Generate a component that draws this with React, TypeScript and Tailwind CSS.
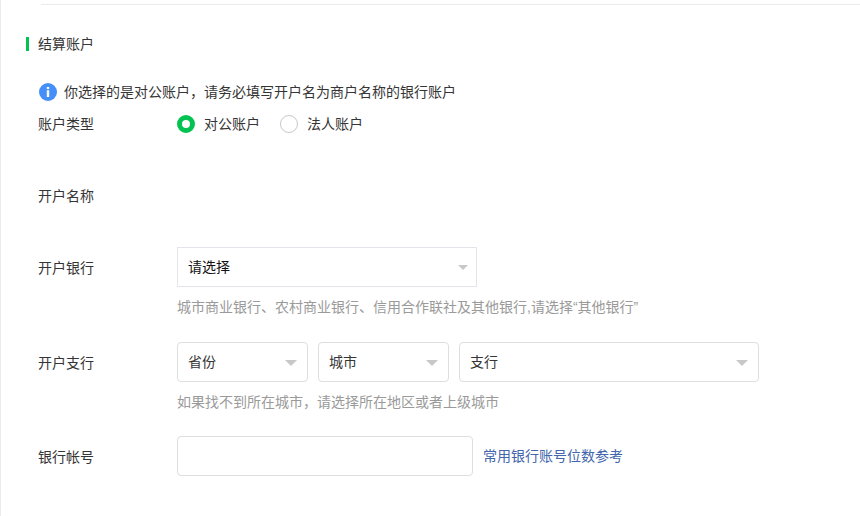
import { useState } from "react";
import type { ReactNode } from "react";
import clsx from "clsx";

const ACCOUNT_TYPES = [
  { value: "corporate", label: "对公账户" },
  { value: "legal", label: "法人账户" },
];

interface FieldRowProps {
  label: string;
  htmlFor?: string;
  className?: string;
  tall?: boolean;
  children?: ReactNode;
}

function FieldRow({ label, htmlFor, className, tall, children }: FieldRowProps) {
  const labelClass = clsx("w-[139px] shrink-0", tall ? "leading-[42px]" : "leading-5");

  return (
    <div className={clsx("flex items-start", className)}>
      {htmlFor ? (
        <label htmlFor={htmlFor} className={labelClass}>
          {label}
        </label>
      ) : (
        <span className={labelClass}>{label}</span>
      )}
      <div className="min-w-0 flex-1">{children}</div>
    </div>
  );
}

interface SelectBoxProps {
  id: string;
  placeholder: string;
  className: string;
  square?: boolean;
}

function SelectBox({ id, placeholder, className, square }: SelectBoxProps) {
  return (
    <div className={clsx("relative", className)}>
      <select
        id={id}
        aria-label={placeholder}
        className={clsx(
          "block h-10 w-full appearance-none border bg-white pr-8 pl-[10px] outline-none",
          square ? "border-[#e4e4ea] text-[#111]" : "rounded-[4px] border-[#dedede]"
        )}
      >
        <option>{placeholder}</option>
      </select>
      <svg
        viewBox="0 0 12 6"
        className={clsx(
          "pointer-events-none absolute fill-[#c8c8c8]",
          square ? "top-[18px] right-[9px] h-[5px] w-[10px]" : "top-[18px] right-[11px] h-[6px] w-[12px]"
        )}
      >
        <path d="M0 0h12L6 6z" />
      </svg>
    </div>
  );
}

export default function App() {
  const [accountType, setAccountType] = useState("corporate");
  const [account, setAccount] = useState("");

  return (
    <main
      lang="zh-CN"
      className="min-h-screen border-l border-[#ebebeb] bg-white pt-1 text-[14px] leading-5 text-[#353535] font-['Liberation_Sans','Noto_Sans_CJK_SC',sans-serif]"
    >
      <hr className="ml-10 border-t border-[#ebebeb]" />

      <form className="pl-[37px]">
        {/* 标题 */}
        <div className="mt-[29px] -ml-3 flex items-center gap-[9px]">
          <span className="h-[14px] w-[3px] bg-[#04c251]" />
          <h2>结算账户</h2>
        </div>

        {/* 提示 */}
        <div className="mt-7 flex items-center gap-[7px] pl-px">
          <svg viewBox="0 0 18 18" className="size-[18px] shrink-0">
            <circle cx="9" cy="9" r="9" fill="#458ff8" />
            <rect x="7.8" y="4" width="2.4" height="2" fill="#fff" />
            <rect x="7.8" y="7.2" width="2.4" height="6.8" fill="#fff" />
          </svg>
          <p>你选择的是对公账户，请务必填写开户名为商户名称的银行账户</p>
        </div>

        <FieldRow label="账户类型" className="mt-3">
          <div className="flex gap-5">
            {ACCOUNT_TYPES.map((type) => (
              <label key={type.value} className="flex items-center gap-[9px]">
                <input
                  type="radio"
                  name="accountType"
                  value={type.value}
                  checked={accountType === type.value}
                  onChange={() => setAccountType(type.value)}
                  className="size-[18px] appearance-none rounded-full border border-[#c8c8c8] bg-white checked:border-[5px] checked:border-[#04c251]"
                />
                {type.label}
              </label>
            ))}
          </div>
        </FieldRow>

        <FieldRow label="开户名称" className="mt-[52px]" />

        <FieldRow label="开户银行" htmlFor="bank" className="mt-[41px]" tall>
          <SelectBox id="bank" placeholder="请选择" className="w-[300px]" square />
          <p className="mt-[10px] text-[#9a9a9a]">
            城市商业银行、农村商业银行、信用合作联社及其他银行,请选择“其他银行”
          </p>
        </FieldRow>

        <FieldRow label="开户支行" htmlFor="province" className="mt-[25px]" tall>
          <div className="flex gap-[10px]">
            <SelectBox id="province" placeholder="省份" className="w-[131px]" />
            <SelectBox id="city" placeholder="城市" className="w-[131px]" />
            <SelectBox id="branch" placeholder="支行" className="w-[300px]" />
          </div>
          <p className="mt-[10px] text-[#9a9a9a]">如果找不到所在城市，请选择所在地区或者上级城市</p>
        </FieldRow>

        <FieldRow label="银行帐号" htmlFor="account" className="mt-6" tall>
          <div className="flex items-center gap-[10px]">
            <input
              id="account"
              type="text"
              value={account}
              onChange={(e) => setAccount(e.target.value)}
              className="h-10 w-[296px] rounded-[4px] border border-[#dedede] bg-white px-[10px] outline-none"
            />
            <a href="#" className="text-[#4265ac]">
              常用银行账号位数参考
            </a>
          </div>
        </FieldRow>
      </form>
    </main>
  );
}
